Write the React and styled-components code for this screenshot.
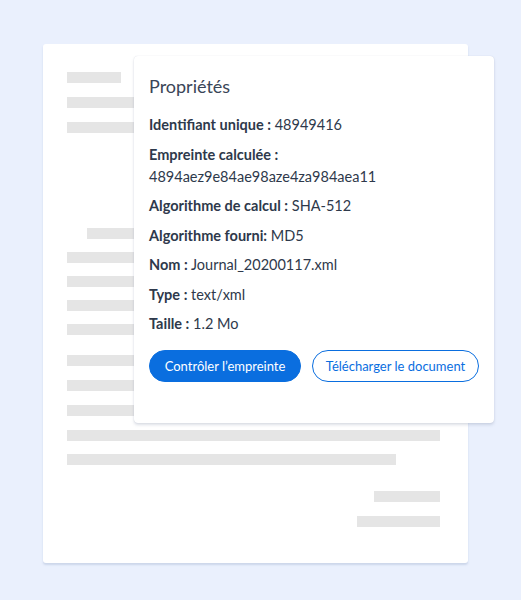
import React from 'react';
import styled, { createGlobalStyle } from 'styled-components';

const rows = [
  { label: 'Identifiant unique :', value: '48949416' },
  { label: 'Empreinte calculée :', value: '4894aez9e84ae98aze4za984aea11', wrap: true },
  { label: 'Algorithme de calcul :', value: 'SHA-512' },
  { label: 'Algorithme fourni:', value: 'MD5' },
  { label: 'Nom :', value: 'Journal_20200117.xml' },
  { label: 'Type :', value: 'text/xml' },
  { label: 'Taille :', value: '1.2 Mo' },
];

// placeholder lines of the document behind the panel
const lines = [
  { w: 54, top: 0 },
  { w: 220, top: 14 },
  { w: 220, top: 14 },
  { w: 200, top: 95, indent: 20 },
  { w: 220, top: 13 },
  { w: 220, top: 13 },
  { w: 220, top: 13 },
  { w: 220, top: 13 },
  { w: 220, top: 20 },
  { w: 220, top: 14 },
  { w: 220, top: 14 },
  { w: 373, top: 14 },
  { w: 329, top: 13 },
  { w: 66, top: 26, right: true },
  { w: 83, top: 14, right: true },
];

export default function App() {
  return (
    <>
      <GlobalStyle />
      <Stage>
        <Sheet>
          {lines.map((l, i) => (
            <Line key={i} $w={l.w} $top={l.top} $indent={l.indent} $right={l.right} />
          ))}
        </Sheet>
        <Panel>
          <Title>Propriétés</Title>
          <Rows>
            {rows.map((r) => (
              <Row key={r.label}>
                <b>{r.label}</b>
                {r.wrap ? <br /> : ' '}
                {r.value}
              </Row>
            ))}
          </Rows>
          <Actions>
            <PrimaryButton>Contrôler l’empreinte</PrimaryButton>
            <OutlineButton>Télécharger le document</OutlineButton>
          </Actions>
        </Panel>
      </Stage>
    </>
  );
}

const GlobalStyle = createGlobalStyle`
body {
    margin: 0;
    background: #EAF0FD;
    font-family: Lato, 'Liberation Sans', sans-serif;
}
`

const Stage = styled.div`
    position: relative;
    width: 521px;
    height: 600px;
    padding: 44px 0 0 43px;
    box-sizing: border-box;
`

const Sheet = styled.div`
    width: 425px;
    height: 519px;
    box-sizing: border-box;
    padding: 28px 28px 0 24px;
    background: #FFFFFF;
    border-radius: 3px;
    box-shadow: 0 2px 2px rgba(150, 165, 200, 0.35);
    display: flex;
    flex-direction: column;
`

const Line = styled.div`
    height: 11px;
    width: ${p => p.$w}px;
    margin-top: ${p => p.$top}px;
    margin-left: ${p => p.$indent || 0}px;
    align-self: ${p => p.$right ? 'flex-end' : 'flex-start'};
    background: #E5E5E5;
`

const Panel = styled.div`
    position: absolute;
    left: 134px;
    top: 56px;
    width: 360px;
    height: 367px;
    box-sizing: border-box;
    padding: 18px 15px 0 15px;
    background: #FFFFFF;
    border-radius: 4px;
    box-shadow: 0 2px 3px rgba(120, 130, 160, 0.25), 0 0 1px rgba(120, 130, 160, 0.3);
`

const Title = styled.h2`
    margin: 0;
    font-size: 18px;
    line-height: 24px;
    font-weight: 400;
    color: #3A4557;
`

const Rows = styled.div`
    margin-top: 16px;
    display: flex;
    flex-direction: column;
    gap: 7.5px;
`

const Row = styled.div`
    font-size: 14.5px;
    line-height: 22px;
    color: #2E394B;

    b {
        font-weight: 700;
    }
`

const Actions = styled.div`
    margin-top: 15px;
    display: flex;
    gap: 11px;
`

const PrimaryButton = styled.button`
    height: 32px;
    width: 153px;
    border: 1px solid #0A6EDF;
    border-radius: 16px;
    background: #0A6EDF;
    color: #FFFFFF;
    font-family: Lato, 'Liberation Sans', sans-serif;
    font-size: 13px;
    padding: 0;
    cursor: pointer;
`

const OutlineButton = styled(PrimaryButton)`
    width: 168px;
    background: #FFFFFF;
    color: #0A6EDF;
`
